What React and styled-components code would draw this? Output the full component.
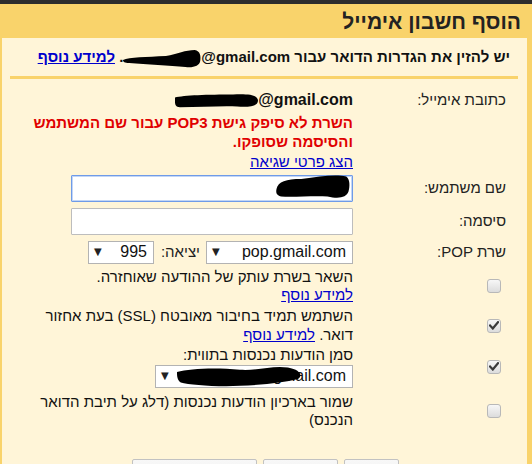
import React from 'react';
import styled, { createGlobalStyle } from 'styled-components';

const GlobalStyle = createGlobalStyle`
  html, body { margin: 0; padding: 0; }
  body { background: #f9d36b; font-family: "Liberation Sans", Arial, sans-serif; }
`;

const Dialog = styled.div`
  direction: rtl;
  width: 532px;
  height: 464px;
  box-sizing: border-box;
  border-top: 4px solid #2d2d2d;
  background: #f9d36b;
  display: flex;
  flex-direction: column;
  overflow: hidden;
  font-family: "Liberation Sans", Arial, sans-serif;
  color: #222;
`;

const Title = styled.h1`
  margin: 0;
  height: 34px;
  line-height: 35px;
  padding-right: 11px;
  font-size: 21px;
  font-weight: bold;
  color: #222;
`;

const Panel = styled.div`
  flex: 1;
  margin-right: 5px;
  margin-left: 2px;
  background: #fff5d8;
`;

const Notice = styled.div`
  margin: 0 9px 0 8px;
  height: 38px;
  line-height: 38px;
  padding: 0 8px;
  border-bottom: 3px solid #f9d36b;
  font-size: 15px;
  font-weight: bold;
  white-space: nowrap;
  color: #111;
`;

const Ltr = styled.span`
  direction: ltr;
  unicode-bidi: isolate;
  display: inline-block;
  font-size: ${p => (p.$size ? `${p.$size}px` : 'inherit')};
`;

const Link = styled.a`
  color: #0000cc;
  text-decoration: underline;
  cursor: pointer;
  font-weight: ${p => (p.$bold ? 'bold' : 'normal')};
`;

const Row = styled.div`
  display: grid;
  grid-template-columns: 174px 326px;
  margin-top: ${p => p.$mt}px;
  align-items: ${p => (p.$center ? 'center' : 'start')};
`;

const Label = styled.div`
  padding-right: 21px;
  font-size: 15px;
  line-height: 18.4px;
  color: #222;
`;

const CheckCell = styled.div`
  padding-right: 26px;
  display: flex;
`;

const Value = styled.div`
  font-size: 15px;
  line-height: 18.4px;
  color: #111;
`;

const EmailLine = styled.div`
  font-weight: bold;
`;

const ErrorText = styled.div`
  margin-top: 5px;
  font-weight: bold;
  color: #e00000;
`;

const DetailsLine = styled.div`
  margin-top: 2px;
`;

const Field = styled.div`
  position: relative;
  width: 282px;
  height: 27px;
`;

const Input = styled.input`
  box-sizing: border-box;
  width: 100%;
  height: 100%;
  margin: 0;
  background: #fff;
  border: 1px solid ${p => (p.$focus ? '#6f9be8' : '#bdbdbd')};
  box-shadow: ${p => (p.$focus ? 'inset 0 0 0 1px #c3d6f6' : 'none')};
  border-radius: 1px;
  outline: none;
  font: 16px "Liberation Sans", Arial, sans-serif;
`;

const Overlay = styled.span`
  position: absolute;
  line-height: 0;
`;

const InlineRow = styled.div`
  display: flex;
  align-items: center;
  gap: 6px;
`;

const PortLabel = styled.span`
  margin-left: 1px;
  color: #222;
`;

const Select = styled.div`
  position: relative;
  box-sizing: border-box;
  width: ${p => p.$w}px;
  height: 23px;
  border: 1px solid #b3b3b3;
  background: #fff;
  display: flex;
  align-items: center;
  justify-content: space-between;
  padding: 0 6px 0 5px;
  font-size: 16px;
  color: #111;
`;

const Arrow = styled.span`
  font-size: 10px;
  font-family: "DejaVu Sans", sans-serif;
  color: #222;
  line-height: 1;
`;

const Box = styled.span`
  box-sizing: border-box;
  width: 14px;
  height: 14px;
  border: 1px solid #b8b8b8;
  border-radius: 3px;
  background: linear-gradient(#f7f7f7, #dcdcdc);
  display: flex;
  align-items: center;
  justify-content: center;
`;

const Line = styled.div`
  line-height: 18.4px;
`;

const ButtonBar = styled.div`
  display: flex;
  gap: 6px;
  margin-top: 30px;
  padding-right: 128px;
`;

const Button = styled.div`
  box-sizing: border-box;
  width: ${p => p.$w}px;
  height: 30px;
  border: 1px solid #c2c2c2;
  border-radius: 2px;
  background: linear-gradient(#f8f8f8, #ececec);
`;

const Blob = ({ w, h, d }) => (
  <svg width={w} height={h} viewBox="0 0 100 20" preserveAspectRatio="none" style={{ verticalAlign: 'middle', display: 'inline-block' }}>
    <path d={d} fill="#000" />
  </svg>
);

const BLOB_A = 'M0 12 C 8 9, 30 9, 55 8 C 70 6, 80 2, 92 2 C 99 3, 100 8, 99 13 C 98 18, 90 20, 80 19 C 60 18, 30 16, 8 15 C 2 15, 0 14, 0 12 Z';
const BLOB_B = 'M0 6 C 10 3, 40 2, 70 2 C 90 1, 100 3, 100 10 C 100 17, 92 19, 75 18 C 55 17, 30 19, 6 19 C 1 19, 0 15, 0 12 Z';
const BLOB_C = 'M2 12 C 4 6, 15 4, 35 4 C 60 2, 80 0, 95 2 C 100 4, 100 10, 98 14 C 95 19, 85 20, 70 18 C 50 17, 25 19, 8 18 C 2 17, 1 15, 2 12 Z';
const BLOB_D = 'M0 7 C 10 4, 30 3, 50 5 C 65 6, 75 1, 88 3 C 98 5, 100 10, 96 13 C 85 16, 70 18, 50 19 C 30 20, 10 18, 3 16 C 0 14, 0 10, 0 7 Z';

const Check = () => (
  <svg width="10" height="9" viewBox="0 0 10 9">
    <path d="M1 4.5 L3.8 7.5 L9 1.2" fill="none" stroke="#3a3a3a" strokeWidth="2.2" strokeLinecap="square" />
  </svg>
);

const Checkbox = ({ checked }) => <Box>{checked && <Check />}</Box>;

export default function App() {
  return (
    <>
      <GlobalStyle />
      <Dialog>
        <Title>הוסף חשבון אימייל</Title>
        <Panel>
          <Notice>
            יש להזין את הגדרות הדואר עבור{' '}
            <Ltr>
              <Blob w={78} h={20} d={BLOB_A} />@gmail.com
            </Ltr>
            .{' '}
            <Link $bold>למידע נוסף</Link>
          </Notice>

          <Row $mt={12}>
            <Label>כתובת אימייל:</Label>
            <Value>
              <EmailLine>
                <Ltr $size={16}>
                  <Blob w={83} h={15} d={BLOB_B} />@gmail.com
                </Ltr>
              </EmailLine>
              <ErrorText>השרת לא סיפק גישת POP3 עבור שם המשתמש והסיסמה שסופקו.</ErrorText>
              <DetailsLine>
                <Link>הצג פרטי שגיאה</Link>
              </DetailsLine>
            </Value>
          </Row>

          <Row $mt={3} $center>
            <Label>שם משתמש:</Label>
            <Value>
              <Field>
                <Input $focus defaultValue="" />
                <Overlay style={{ right: 3, top: -1 }}>
                  <Blob w={75} h={25} d={BLOB_C} />
                </Overlay>
              </Field>
            </Value>
          </Row>

          <Row $mt={6} $center>
            <Label>סיסמה:</Label>
            <Value>
              <Field>
                <Input type="password" defaultValue="" />
              </Field>
            </Value>
          </Row>

          <Row $mt={6} $center>
            <Label>שרת POP:</Label>
            <Value>
              <InlineRow>
                <Select $w={147}>
                  <span>pop.gmail.com</span>
                  <Arrow>▼</Arrow>
                </Select>
                <PortLabel>יציאה:</PortLabel>
                <Select $w={66}>
                  <span>995</span>
                  <Arrow>▼</Arrow>
                </Select>
              </InlineRow>
            </Value>
          </Row>

          <Row $mt={4} $center>
            <CheckCell>
              <Checkbox />
            </CheckCell>
            <Value>
              <Line>השאר בשרת עותק של ההודעה שאוחזרה.</Line>
              <Line>
                <Link>למידע נוסף</Link>
              </Line>
            </Value>
          </Row>

          <Row $mt={3} $center>
            <CheckCell>
              <Checkbox checked />
            </CheckCell>
            <Value>
              השתמש תמיד בחיבור מאובטח (SSL) בעת אחזור דואר. <Link>למידע נוסף</Link>
            </Value>
          </Row>

          <Row $mt={2} $center>
            <CheckCell>
              <Checkbox checked />
            </CheckCell>
            <Value>
              <Line>סמן הודעות נכנסות בתווית:</Line>
              <Select $w={198}>
                <Ltr>@gmail.com</Ltr>
                <Arrow>▼</Arrow>
                <Overlay style={{ left: 21, top: -2 }}>
                  <Blob w={126} h={23} d={BLOB_D} />
                </Overlay>
              </Select>
            </Value>
          </Row>

          <Row $mt={5} $center>
            <CheckCell>
              <Checkbox />
            </CheckCell>
            <Value>שמור בארכיון הודעות נכנסות (דלג על תיבת הדואר הנכנס)</Value>
          </Row>

          <ButtonBar>
            <Button $w={55} />
            <Button $w={75} />
            <Button $w={125} />
          </ButtonBar>
        </Panel>
      </Dialog>
    </>
  );
}
